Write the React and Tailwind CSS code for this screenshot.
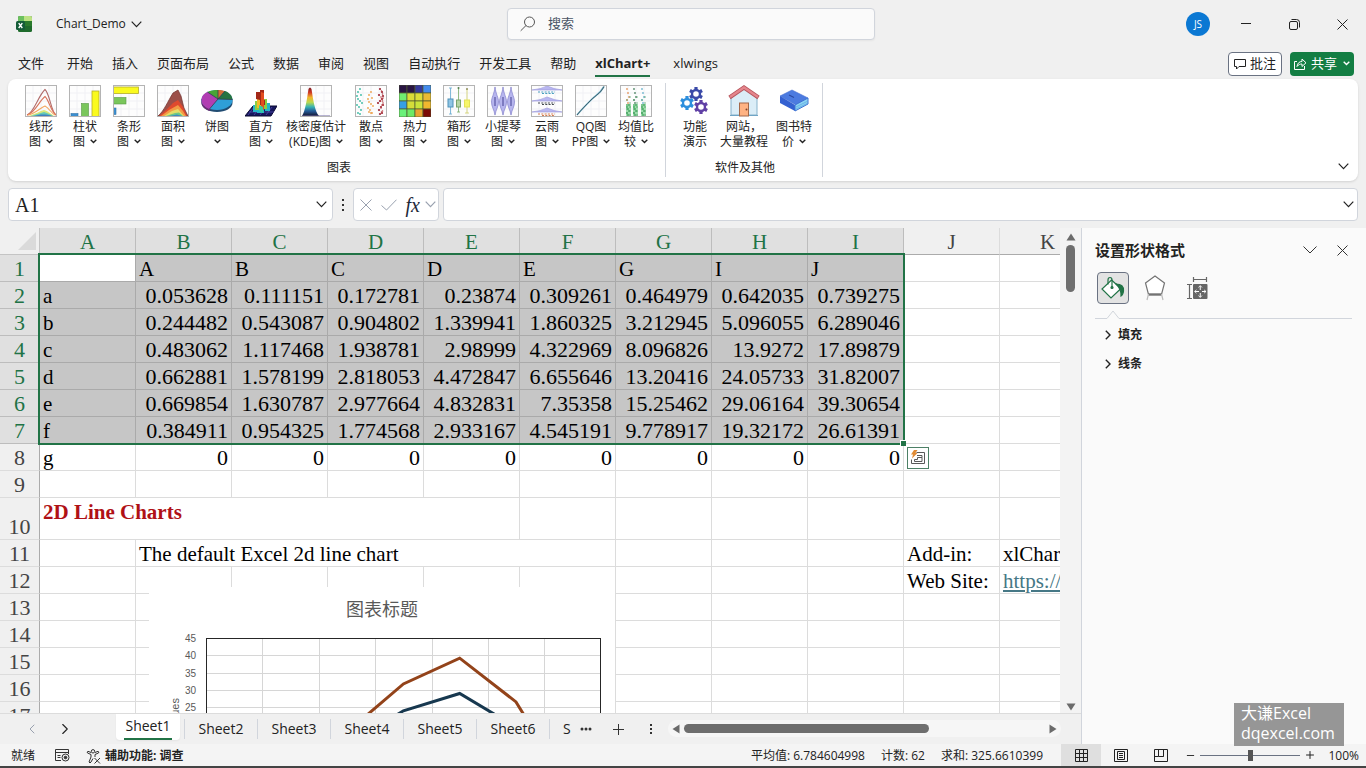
import { useState } from "react";
import { ChevronLeft, ChevronRight, Minus, Plus } from "lucide-react";

const menuTabs = [
  "文件",
  "开始",
  "插入",
  "页面布局",
  "公式",
  "数据",
  "审阅",
  "视图",
  "自动执行",
  "开发工具",
  "帮助",
  "xlChart+",
  "xlwings",
];

const columns = ["A", "B", "C", "D", "E", "F", "G", "H", "I", "J", "K"];

const dataRows = [
  ["", "A", "B", "C", "D", "E", "G", "I", "J"],
  ["a", "0.053628", "0.111151", "0.172781", "0.23874", "0.309261", "0.464979", "0.642035", "0.739275"],
  ["b", "0.244482", "0.543087", "0.904802", "1.339941", "1.860325", "3.212945", "5.096055", "6.289046"],
  ["c", "0.483062", "1.117468", "1.938781", "2.98999", "4.322969", "8.096826", "13.9272", "17.89879"],
  ["d", "0.662881", "1.578199", "2.818053", "4.472847", "6.655646", "13.20416", "24.05733", "31.82007"],
  ["e", "0.669854", "1.630787", "2.977664", "4.832831", "7.35358", "15.25462", "29.06164", "39.30654"],
  ["f", "0.384911", "0.954325", "1.774568", "2.933167", "4.545191", "9.778917", "19.32172", "26.61391"],
  ["g", "0", "0", "0", "0", "0", "0", "0", "0"],
];

const sheets = ["Sheet2", "Sheet3", "Sheet4", "Sheet5", "Sheet6"];

function Chevron({ small, className }) {
  if (small) {
    return (
      <svg width="7" height="5" viewBox="0 0 7 5" className={className}>
        <path d="M.7.7L3.500 3.500L6.300.7" fill="none" stroke="currentColor" strokeWidth="1.400" />
      </svg>
    );
  }
  return (
    <svg width="11" height="7" viewBox="0 0 11 7" className={className}>
      <path d="M.7.700L5.500 5.700L10.300.700" fill="none" stroke="currentColor" strokeWidth="1.200" />
    </svg>
  );
}

function Frame({ children }) {
  return (
    <svg width="32" height="32" viewBox="0 0 32 32">
      <rect x="0.5" y="0.5" width="31" height="31" fill="#fdfdfd" />
      <path d="M8 1v30M16 1v30M24 1v30M1 8h30M1 16h30M1 24h30" stroke="#f1f1f5" />
      {children}
      <rect x="0.5" y="0.5" width="31" height="31" fill="none" stroke="#b4b4b4" />
    </svg>
  );
}

function LineIcon() {
  return (
    <Frame>
      <g fill="none" strokeWidth="1.1">
        <path d="M2 30C9 28 13 11 20 4.500C25 9 26 27 31 30" stroke="#b06b6b" />
        <path d="M2 30C10 28 14 16 20 11.500C24 15 26 27 31 30" stroke="#d8735c" />
        <path d="M3 30C10 29 15 23 20 21C24 23 26 28 30 30" stroke="#f2a55f" />
      </g>
      <path d="M4 31C10 29 15 26 19 25C23 26 26 29 29 31Z" fill="#d9e77c" />
      <path d="M6 31C12 29 16 28 19 27C23 28 26 30 28 31Z" fill="#63c9b8" />
      <path d="M9 31C14 29.500 20 28.500 27 31Z" fill="#3f7fc0" />
    </Frame>
  );
}

function ColumnIcon() {
  return (
    <Frame>
      <rect x="2" y="28.500" width="7" height="3" fill="#3c8fd0" stroke="#3476a8" strokeWidth="0.6" />
      <rect x="12.500" y="18.500" width="7" height="13" fill="#7ac65c" stroke="#589647" strokeWidth="0.6" />
      <rect x="23" y="6" width="7" height="25.500" fill="#fafa1e" stroke="#b3ad2c" strokeWidth="0.8" />
    </Frame>
  );
}

function BarIcon() {
  return (
    <Frame>
      <rect x="0.500" y="2" width="25" height="6.500" fill="#fafa1e" stroke="#b3ad2c" strokeWidth="0.8" />
      <rect x="0.500" y="12.500" width="12.500" height="6.500" fill="#7ac65c" stroke="#589647" strokeWidth="0.6" />
      <rect x="0.500" y="23" width="2.500" height="6.500" fill="#3c8fd0" stroke="#3476a8" strokeWidth="0.6" />
    </Frame>
  );
}

function AreaIcon() {
  return (
    <Frame>
      <path d="M1 31C7 26 11 16 16 8L21 5L24 11L27 23L31 31Z" fill="#9c4f49" stroke="#702f2d" strokeWidth="0.7" />
      <path d="M2 31L9 25L16 18L21 15L26 22L30 31Z" fill="#e04a2e" />
      <path d="M4 31L12 25L21 20L26 26L29 31Z" fill="#f39b45" />
      <path d="M7 31L15 26L21 24L27 31Z" fill="#e5dc68" />
      <path d="M9 31L18 28L22 27.500L26 31Z" fill="#6fc886" />
      <path d="M12 31L20 29.500L25 31Z" fill="#3b8ac4" />
    </Frame>
  );
}

function PieIcon() {
  return (
    <svg width="32" height="32" viewBox="0 0 32 32">
      <path d="M0.500 14v4c0 5 7 9 15.500 9s15.500-4 15.500-9v-4Z" fill="#214c72" />
      <path d="M0.500 14v4c0 3 3 6 8 8l3-5Z" fill="#702b73" />
      <ellipse cx="16" cy="15" rx="15.500" ry="10" fill="#2e9fd8" />
      <path d="M17 14L8.500 24C3 22 .5 18 .5 15C.5 11 3 8.500 6.500 7Z" fill="#b13eb2" />
      <path d="M17 14L6.500 7C9.500 5.500 13 5 17 5Z" fill="#48a437" />
      <path d="M17 14V5C20 5 22 5.500 24 6Z" fill="#d56e36" />
      <path d="M17 14L24 6C28 7.500 31 10 31.500 14.500Z" fill="#277441" />
      <path d="M6.500 7L17 14L8.500 24M17 5v9l7-8M17 14l14.500.5" fill="none" stroke="#333d4d" strokeWidth="0.8" />
    </svg>
  );
}

function HistogramIcon() {
  return (
    <svg width="32" height="32" viewBox="0 0 32 32">
      <path d="M0 31L8 21H32L26 31Z" fill="#16175e" stroke="#0b0b32" />
      <path d="M3 30L9 22M9 30L15 22M15 30L21 22M21 30L27 22M4 27H29" stroke="#564fb2" strokeWidth="0.7" />
      <path d="M8 25V20H12V27H8ZM20 26V18H25V26ZM12 28V21H19V28Z" fill="#25b5c8" />
      <path d="M10 22V16H14V25H10ZM18 24V14H22V24Z" fill="#8cce42" />
      <path d="M12 18V11H16V23H12Z" fill="#f4ba27" />
      <path d="M11 14V7H15V5H19V15H20V20H15V15Z" fill="#a32818" />
      <path d="M16 7V23L19 25V8Z" fill="#e34d1f" />
      <path d="M14 20V26L18 28V22Z" fill="#39c9a0" />
    </svg>
  );
}

function DensityIcon() {
  return (
    <Frame>
      <defs>
        <linearGradient id="density" x1="0" y1="0" x2="0" y2="1">
          <stop offset="0" stopColor="#7b1721" />
          <stop offset="0.18" stopColor="#d23b24" />
          <stop offset="0.35" stopColor="#f0b52b" />
          <stop offset="0.52" stopColor="#b8d84e" />
          <stop offset="0.68" stopColor="#36b3b4" />
          <stop offset="0.83" stopColor="#245996" />
          <stop offset="1" stopColor="#15152f" />
        </linearGradient>
      </defs>
      <path d="M2 31C5 27 7 14 8.500 4Q10 1 11.500 4C13 14 15 27 19 31Z" fill="url(#density)" />
      <path d="M2 31H30" stroke="#726aa4" />
    </Frame>
  );
}

const scatterPoints = [
  [3, 7], [5, 4], [6, 10], [3, 14], [5, 16], [7, 18], [2, 20], [4, 22], [6, 25], [3, 28], [5, 29], [2, 11],
];

function ScatterIcon() {
  return (
    <Frame>
      {scatterPoints.map(([x, y]) => (
        <g key={`${x}-${y}`}>
          <circle cx={x} cy={y} r="0.9" fill="#35b8a0" />
          <circle cx={x + 11} cy={y > 25 ? y - 1 : y + 3} r="0.9" fill="#eda24b" />
          <circle cx={30 - x} cy={y} r="1.1" fill="#9f2635" />
          <circle cx={29 - x / 2} cy={y > 15 ? y - 2 : y + 2} r="0.8" fill="#b94348" />
        </g>
      ))}
    </Frame>
  );
}

const heatColors = [
  "#291542", "#291542", "#35389a", "#438bed",
  "#70eb70", "#dcdb37", "#dddd38", "#e9ba35",
  "#359fe4", "#d4dd39", "#c9e43b", "#f1b72f",
  "#69f27a", "#6eea65", "#e8a532", "#7c0a06",
];

function HeatIcon() {
  return (
    <svg width="32" height="32" viewBox="0 0 32 32">
      {heatColors.map((fill, i) => (
        <rect key={i} x={(i % 4) * 8} y={Math.floor(i / 4) * 8} width="8" height="8" fill={fill} stroke="#4f5a32" strokeWidth="0.7" />
      ))}
    </svg>
  );
}

function BoxIcon() {
  return (
    <Frame>
      <path d="M7.500 3V29M6 3h3M6 29h3" stroke="#62a9d0" strokeWidth="0.8" />
      <rect x="5" y="14" width="5" height="8" fill="#8fc4e4" stroke="#4f91b8" />
      <path d="M15.500 3V27M14 27h3" stroke="#77aa67" strokeWidth="0.8" />
      <rect x="13.500" y="15" width="4" height="7" fill="#b5d4a5" stroke="#79a36a" />
      <path d="M24 4V28M22 28h4" stroke="#d1cf65" strokeWidth="0.8" />
      <rect x="21.500" y="15" width="5" height="7" fill="#f7f66a" stroke="#e4e256" />
      <circle cx="15.500" cy="3" r="1" fill="#517d4c" />
      <circle cx="24" cy="4" r="1" fill="#91915b" />
    </Frame>
  );
}

function ViolinIcon() {
  return (
    <Frame>
      {[8, 16, 24].map((x) => (
        <g key={x} transform={`translate(${x} 0)`}>
          <path d="M0 2C1 10 3.500 12 3.500 17S1 24 0 30C-1 24-3.500 22-3.500 17S-1 10 0 2Z" fill="#b6b5ee" stroke="#8280cb" strokeWidth="0.7" />
          <path d="M0 12v9" stroke="#5754a2" strokeWidth="1.200" />
        </g>
      ))}
    </Frame>
  );
}

function RainIcon() {
  const rows = [
    [5, "#4a9fc0"],
    [16, "#454b50"],
    [27, "#d47c51"],
  ];
  return (
    <Frame>
      {rows.map(([y, color]) => (
        <g key={y}>
          <path d={`M1 ${y}Q10 ${y - 1} 16 ${y - 4}Q23 ${y - 1} 31 ${y}Z`} fill="#b9b7f0" stroke="#9896da" strokeWidth="0.6" />
          <path d={`M7 ${y + 2}h17M11 ${y + 3.500}h13`} stroke={color} strokeDasharray="2 1.300" />
        </g>
      ))}
    </Frame>
  );
}

function QQIcon() {
  return (
    <Frame>
      <path d="M2 30C7 24 11 20 16 15S25 9 29 1.500" fill="none" stroke="#75b2c9" strokeWidth="1.600" />
      <path d="M2 30C7 24 11 20 16 15S25 9 29 1.500" fill="none" stroke="#354e57" strokeWidth="0.8" />
    </Frame>
  );
}

function MeanIcon() {
  const bands = [
    [8, "#e59a63"],
    [15, "#55896a"],
    [23, "#70b6ce"],
  ];
  return (
    <Frame>
      {bands.map(([x, color]) => (
        <g key={x}>
          <rect x={x - 2} y="19" width="5" height="12" fill="#9bdcaa" />
          {[4, 8, 12, 15, 18, 20, 22, 24, 26, 28, 30].map((y, i) => (
            <g key={y}>
              <circle cx={x - 1 + (i % 3)} cy={y} r="0.9" fill={y < 19 ? color : "#45a862"} />
              {y > 10 && <circle cx={x + 2 - (i % 2) * 3} cy={y} r="0.7" fill="#4a9961" />}
            </g>
          ))}
        </g>
      ))}
    </Frame>
  );
}

function Gear({ x, y, color }) {
  return (
    <g transform={`translate(${x} ${y})`}>
      {[0, 60, 120, 180, 240, 300].map((angle) => (
        <rect key={angle} x="-1.600" y="-7" width="3.200" height="3" fill={color} transform={`rotate(${angle})`} />
      ))}
      <circle r="4" fill="#fff" stroke={color} strokeWidth="2.400" />
    </g>
  );
}

function GearsIcon() {
  return (
    <svg width="32" height="32" viewBox="0 0 32 32">
      <Gear x={17} y={9} color="#3b4ba8" />
      <Gear x={8} y={18} color="#2d8fdd" />
      <Gear x={22} y={22} color="#6040a5" />
    </svg>
  );
}

function HouseIcon() {
  return (
    <svg width="32" height="32" viewBox="0 0 32 32">
      <path d="M3 13L16 3L29 13V30H3Z" fill="#dbedf7" stroke="#87b2cb" />
      <path d="M1.500 12.500L16 2.500L30.500 12.500" fill="none" stroke="#b5555c" strokeWidth="4" />
      <path d="M2 12L16 2.500L30 12" fill="none" stroke="#e5858c" strokeWidth="2.400" />
      <rect x="11.500" y="18" width="9" height="13" fill="#ffb383" stroke="#a4694a" />
      <circle cx="18.500" cy="24.500" r="1" fill="#7b432e" />
      <path d="M2 30.500h9M21 30.500h9" stroke="#70a5c5" />
    </svg>
  );
}

function BookIcon() {
  return (
    <svg width="32" height="32" viewBox="0 0 32 32">
      <path d="M2 11L14 5L30 13L18 20Z" fill="#4c7be0" stroke="#456fd2" strokeWidth="0.600" />
      <path d="M2 11V18L17 26V20Z" fill="#3461d1" />
      <path d="M17 20L30 13V19L17 26Z" fill="#8ad3f3" stroke="#3f72d3" />
      <path d="M18 22L30 16M18 24L30 18" stroke="#5fa7df" strokeWidth="0.700" />
      <path d="M11 10l5 2.500" stroke="#2b4aa3" strokeWidth="1.200" />
    </svg>
  );
}

const chartTools = [
  { icon: LineIcon, lines: ["线形", "图"], menu: true },
  { icon: ColumnIcon, lines: ["柱状", "图"], menu: true },
  { icon: BarIcon, lines: ["条形", "图"], menu: true },
  { icon: AreaIcon, lines: ["面积", "图"], menu: true },
  { icon: PieIcon, lines: ["饼图", ""], menu: true },
  { icon: HistogramIcon, lines: ["直方", "图"], menu: true },
  { icon: DensityIcon, lines: ["核密度估计", "(KDE)图"], menu: true, width: "w-[66px]" },
  { icon: ScatterIcon, lines: ["散点", "图"], menu: true },
  { icon: HeatIcon, lines: ["热力", "图"], menu: true },
  { icon: BoxIcon, lines: ["箱形", "图"], menu: true },
  { icon: ViolinIcon, lines: ["小提琴", "图"], menu: true },
  { icon: RainIcon, lines: ["云雨", "图"], menu: true },
  { icon: QQIcon, lines: ["QQ图", "PP图"], menu: true },
  { icon: MeanIcon, lines: ["均值比", "较"], menu: true, width: "w-[46px]" },
];

const otherTools = [
  { icon: GearsIcon, lines: ["功能", "演示"] },
  { icon: HouseIcon, lines: ["网站，", "大量教程"], width: "w-[54px]" },
  { icon: BookIcon, lines: ["图书特", "价"], menu: true, width: "w-[46px]" },
];

function ToolButton({ tool }) {
  const Icon = tool.icon;
  return (
    <button className={`flex flex-col items-center text-xs leading-[15px] whitespace-nowrap ${tool.width || "w-11"}`}>
      <Icon />
      <span className="mt-[2px]">{tool.lines[0]}</span>
      <span className="flex items-center gap-[5px] h-[15px]">
        {tool.lines[1]}
        {tool.menu && <Chevron small />}
      </span>
    </button>
  );
}

function ToolGroup({ title, tools, className }) {
  return (
    <section className={`flex flex-col my-1 pt-[2px] pb-[1px] border-r border-gray-300 ${className}`}>
      <div className="flex flex-1">
        {tools.map((tool) => (
          <ToolButton key={tool.lines.join("")} tool={tool} />
        ))}
      </div>
      <h2 className="text-xs leading-4 text-center">{title}</h2>
    </section>
  );
}

function TitleBar() {
  return (
    <header className="flex items-center h-12 shrink-0 pl-4">
      <div className="flex flex-1 items-center">
        <svg width="16" height="16" viewBox="0 0 16 16" aria-label="Excel">
          <rect x="2" width="14" height="16" rx="1.500" fill="#1f6b2c" />
          <path d="M3.500 0H9v5H2V1.500Q2 0 3.500 0Z" fill="#6cc05f" />
          <path d="M8 0h6.500Q16 0 16 1.500V5H8Z" fill="#bde283" />
          <path d="M8 5h8v5H8Z" fill="#2a7a2c" />
          <rect y="5" width="9" height="9" rx="1.500" fill="#145c38" />
          <path d="M2.700 7.200l3.600 4.800M6.300 7.200L2.700 12" stroke="#fff" strokeWidth="1.400" />
        </svg>
        <button className="flex items-center gap-[5px] ml-6 text-xs">
          Chart_Demo
          <Chevron />
        </button>
      </div>
      <label className="flex items-center gap-3 w-[368px] h-8 px-3 rounded border border-gray-300 bg-[#fafafa] shadow-xs">
        <svg width="16" height="16" viewBox="0 0 16 16" fill="none" stroke="#555" className="shrink-0">
          <circle cx="9.500" cy="6" r="5" />
          <path d="M6 9.500L.7 14.800" />
        </svg>
        <input className="w-full text-[13px] outline-none placeholder:text-gray-600" placeholder="搜索" aria-label="搜索" />
      </label>
      <div className="flex flex-1 justify-end items-center">
        <button className="flex justify-center w-12">
          <span className="flex items-center justify-center size-6 rounded-full bg-[#0b78d3] text-white text-[10px]">JS</span>
        </button>
        <button className="flex justify-center w-12" aria-label="最小化">
          <svg width="10" height="10" viewBox="0 0 10 10"><path d="M0 4.500h10" stroke="#222" /></svg>
        </button>
        <button className="flex justify-center w-12" aria-label="还原">
          <svg width="11" height="11" viewBox="0 0 11 11" fill="none" stroke="#222">
            <rect x="0.500" y="2.500" width="8" height="8" rx="1.500" />
            <path d="M2.500 .5h5q3 0 3 3v5" />
          </svg>
        </button>
        <button className="flex justify-center w-12" aria-label="关闭">
          <svg width="11" height="11" viewBox="0 0 11 11"><path d="M.5.5l10 10M10.500.5l-10 10" stroke="#222" /></svg>
        </button>
      </div>
    </header>
  );
}

function MenuBar() {
  return (
    <nav className="flex items-center h-[31px] shrink-0 pl-[18px] pr-3 text-[13px]">
      <div className="flex flex-1 gap-[19px]">
        {menuTabs.map((tab) => (
          <button
            key={tab}
            className={
              tab === "xlChart+"
                ? "font-bold border-b-2 border-[#217346] leading-6 mr-1"
                : "leading-6 border-b-2 border-transparent first:mr-1"
            }
          >
            {tab}
          </button>
        ))}
      </div>
      <div className="flex gap-2">
        <button className="flex items-center justify-center gap-1 w-[54px] h-6 rounded border border-gray-500 bg-white">
          <svg width="12" height="12" viewBox="0 0 12 12" fill="none" stroke="#222">
            <path d="M.5 1.500h11v7H5L2.500 11V8.500h-2Z" />
          </svg>
          批注
        </button>
        <button className="flex items-center justify-center gap-1 w-16 h-6 rounded bg-[#137e43] text-white">
          <svg width="13" height="13" viewBox="0 0 13 13" fill="none" stroke="#fff">
            <path d="M3 4.500H.5v8h10V9" />
            <path d="M3 9.500C3.500 6 5.500 4.500 8 4.500V2l4 3.800L8 9.500V7C6 7 4.500 7.500 3 9.500Z" />
          </svg>
          共享
          <Chevron small className="ml-[2px]" />
        </button>
      </div>
    </nav>
  );
}

function FormulaBar() {
  return (
    <div className="flex items-center shrink-0 px-2 py-[7px]">
      <div className="flex items-center w-[325px] h-[33px] pl-[6px] pr-[5px] rounded border border-gray-300 bg-white">
        <input className="flex-1 min-w-0 font-['Liberation_Serif',serif] text-xl outline-none" defaultValue="A1" aria-label="名称框" />
        <button aria-label="名称列表"><Chevron /></button>
      </div>
      <svg width="20" height="14" viewBox="0 0 20 14" fill="#333">
        <path d="M9 1h2v2H9zM9 6h2v2H9zM9 11h2v2H9z" />
      </svg>
      <div className="flex items-center justify-between w-[86px] h-[33px] pl-[6px] pr-[2px] rounded border border-gray-300 bg-white text-gray-400">
        <button aria-label="取消">
          <svg width="12" height="12" viewBox="0 0 12 12"><path d="M.5.5l11 11M11.500.5l-11 11" stroke="currentColor" /></svg>
        </button>
        <button aria-label="输入">
          <svg width="16" height="12" viewBox="0 0 16 12"><path d="M.5 6.500L5.500 11L15.500.7" fill="none" stroke="currentColor" /></svg>
        </button>
        <button className="flex items-center gap-[5px]" aria-label="插入函数">
          <span className="font-['Liberation_Serif',serif] italic text-xl leading-6 text-gray-800">fx</span>
          <Chevron />
        </button>
      </div>
      <div className="flex items-center flex-1 h-[33px] ml-1 pr-[3px] rounded border border-gray-300 bg-white">
        <input className="flex-1 min-w-0 px-1 outline-none" aria-label="编辑栏" />
        <button aria-label="展开编辑栏"><Chevron /></button>
      </div>
    </div>
  );
}

function RowHeader({ n, selected }) {
  return (
    <th
      scope="row"
      className={`p-0 pt-[2px] border-r border-b font-normal text-[22px] leading-6 align-bottom ${
        selected ? "bg-[#e0e0e0] text-[#217346] border-[#bdbdbd]" : "bg-[#f0f0f0] text-[#444] border-r-[#ababab] border-b-[#dcdcdc]"
      }`}
    >
      {n}
    </th>
  );
}

function Cell({ children, className = "", line = "border-[#dcdcdc]", colSpan }) {
  return (
    <td colSpan={colSpan} className={`h-[27px] pt-[2px] pb-0 px-[3px] border-r border-b leading-6 whitespace-nowrap overflow-hidden ${line} ${className}`}>
      {children}
    </td>
  );
}

function EmptyCells({ count }) {
  return Array.from({ length: count }, (_, i) => <Cell key={i} />);
}

function DataCell({ row, col, value }) {
  const isNumber = row > 0 && col > 0;
  const inRange = row < 7;
  const isActive = row === 0 && col === 0;
  return (
    <Cell
      line={inRange ? "border-[#aaaaaa]" : "border-[#dcdcdc]"}
      className={`${isNumber ? "text-right text-[22px]" : "text-[21px]"} ${inRange && !isActive ? "bg-[#c6c6c6]" : ""}`}
    >
      {value}
    </Cell>
  );
}

const seriesJ = [0.739, 6.289, 17.899, 31.82, 39.307, 26.614, 0];
const seriesI = [0.642, 5.096, 13.927, 24.057, 29.062, 19.322, 0];

// the plot area runs 45 -> 0 over 155px, one category every 56.3px
function toPoints(values) {
  return values.map((v, i) => `${85.5 + i * 56.3},${51.5 + (45 - v) * 3.45}`).join(" ");
}

function LineChart() {
  return (
    <svg width="466" height="220" viewBox="0 0 466 220" className="bg-white font-['Liberation_Sans','Noto_Sans_CJK_SC',sans-serif]">
      <text x="233" y="29" textAnchor="middle" fontSize="18" fill="#595959">图表标题</text>
      {[40, 35, 30, 25, 20].map((v) => (
        <path key={v} d={`M57 ${Math.round((45 - v) * 3.45) + 51.5}H451`} stroke="#d6d6d6" />
      ))}
      {[113, 170, 226, 283, 339, 395].map((x) => (
        <path key={x} d={`M${x + 0.5} 52V207`} stroke="#d6d6d6" />
      ))}
      {[45, 40, 35, 30, 25, 20].map((v) => (
        <text key={v} x="47" y={55 + (45 - v) * 3.45} textAnchor="end" fontSize="10" fill="#595959">{v}</text>
      ))}
      <text transform="translate(30 111) rotate(-90)" textAnchor="end" fontSize="11" fill="#595959">Values</text>
      <rect x="57.500" y="51.500" width="394" height="155" fill="none" stroke="#262626" />
      <polyline points={toPoints(seriesI)} fill="none" stroke="#17384f" strokeWidth="3" />
      <polyline points={toPoints(seriesJ)} fill="none" stroke="#93431a" strokeWidth="3" />
    </svg>
  );
}

function Grid() {
  return (
    <div className="relative flex-1 min-w-0 overflow-hidden bg-white font-['Liberation_Serif',serif] text-black">
      <table className="table-fixed w-[1096px] border-separate border-spacing-0">
        <colgroup>
          <col className="w-10" />
          {columns.map((c) => (
            <col key={c} className="w-24" />
          ))}
        </colgroup>
        <thead>
          <tr className="h-[27px]">
            <th className="p-0 bg-[#f0f0f0] border-r border-b border-[#c4c4c4]">
              <svg width="36" height="20" viewBox="0 0 36 20"><path d="M36 1V19H18Z" fill="#dadada" /></svg>
            </th>
            {columns.map((c, i) => (
              <th
                key={c}
                scope="col"
                className={`p-0 pt-[2px] border-r border-b font-normal text-[21px] leading-6 ${
                  i < 9 ? "bg-[#e0e0e0] text-[#217346] border-[#bdbdbd]" : "bg-[#f0f0f0] text-[#444] border-r-[#dcdcdc] border-b-[#ababab]"
                }`}
              >
                {c}
              </th>
            ))}
          </tr>
        </thead>
        <tbody>
          {dataRows.map((values, row) => (
            <tr key={row}>
              <RowHeader n={row + 1} selected={row < 7} />
              {values.map((value, col) => (
                <DataCell key={col} row={row} col={col} value={value} />
              ))}
              <EmptyCells count={2} />
            </tr>
          ))}
          <tr>
            <RowHeader n={9} />
            <EmptyCells count={11} />
          </tr>
          <tr className="h-[42px]">
            <RowHeader n={10} />
            <Cell colSpan={5} className="align-top text-[21px] font-bold text-[#b01116]">2D Line Charts</Cell>
            <EmptyCells count={6} />
          </tr>
          <tr>
            <RowHeader n={11} />
            <Cell />
            <Cell colSpan={5} className="text-[21px]">The default Excel 2d line chart</Cell>
            <EmptyCells count={3} />
            <Cell className="text-[21px]">Add-in:</Cell>
            <Cell className="text-[21px]">xlChart+</Cell>
          </tr>
          <tr>
            <RowHeader n={12} />
            <EmptyCells count={9} />
            <Cell className="text-[21px]">Web Site:</Cell>
            <Cell className="text-[21px]">
              <a href="https://dqexcel.com" className="text-[#467886] underline">https://</a>
            </Cell>
          </tr>
          {[13, 14, 15, 16, 17].map((n) => (
            <tr key={n}>
              <RowHeader n={n} />
              <EmptyCells count={11} />
            </tr>
          ))}
        </tbody>
      </table>

      {/* selection A1:I7 */}
      <div className="absolute left-[38px] top-[25px] w-[867px] h-[192px] border-2 border-[#217346] pointer-events-none">
        <span className="absolute -right-[3px] -bottom-[3px] size-[6px] bg-[#217346] border-t border-l border-white" />
      </div>
      <button className="absolute left-[907px] top-[219px] flex items-center justify-center w-[22px] h-[22px] border border-[#4d8066] bg-white" aria-label="快速分析">
        <svg width="16" height="16" viewBox="0 0 16 16" fill="none" stroke="#595959">
          <path d="M6.500 2.500h8v11h-13v-4M7 5.500h5v2H8.500M4.500 11.500V9.500h3v-2h4.500v4Z" />
          <path d="M4 0h3.500L5.500 3h2L2 8.500l1-4H1Z" fill="#e08b35" stroke="none" />
        </svg>
      </button>
      <div className="absolute left-[149px] top-[359px]">
        <LineChart />
      </div>
    </div>
  );
}

function VerticalScroll() {
  return (
    <div className="flex flex-col items-center w-[21px] shrink-0 bg-[#f3f3f3]">
      <button className="h-[17px]" aria-label="向上滚动">
        <svg width="10" height="8" viewBox="0 0 10 8"><path d="M5 0.500L9.500 7.500H.5Z" fill="#6b6b6b" /></svg>
      </button>
      <div className="w-[9px] h-[47px] rounded-full bg-[#6e6e6e]" />
      <button className="mt-auto h-3" aria-label="向下滚动">
        <svg width="10" height="8" viewBox="0 0 10 8"><path d="M5 7.500L9.500.5H.5Z" fill="#6b6b6b" /></svg>
      </button>
    </div>
  );
}

function SheetTabs() {
  return (
    <div className="flex h-[31px] shrink-0 bg-[#f0f0f0] text-sm border-t border-[#dcdcdc]">
      <div className="flex items-center gap-4 w-[116px] shrink-0 pl-6">
        <button aria-label="上一张工作表"><ChevronLeft size={16} strokeWidth={1.500} className="text-gray-400" /></button>
        <button aria-label="下一张工作表"><ChevronRight size={18} strokeWidth={1.500} /></button>
      </div>
      <button className="w-16 h-[26px] mr-1 px-2 rounded-b bg-white leading-[22px] shadow-xs">
        <span className="block h-[25px] border-b-2 border-[#217346]">Sheet1</span>
      </button>
      {sheets.map((name) => (
        <button key={name} className="w-[73px] h-5 mt-[5px] border-l border-gray-300 leading-5">{name}</button>
      ))}
      <button className="h-5 mt-[5px] pl-[13px] border-l border-gray-300 leading-5">S</button>
      <button className="px-[9px]" aria-label="更多工作表">
        <svg width="12" height="4" viewBox="0 0 12 4" fill="#333">
          <circle cx="2" cy="2" r="1.500" /><circle cx="6" cy="2" r="1.500" /><circle cx="10" cy="2" r="1.500" />
        </svg>
      </button>
      <button className="px-3" aria-label="新工作表">
        <svg width="11" height="11" viewBox="0 0 11 11"><path d="M5.500 0v11M0 5.500h11" stroke="#333" /></svg>
      </button>
      <div className="flex items-center pl-2 pr-[10px]">
        <svg width="14" height="14" viewBox="0 0 14 14" fill="#333"><path d="M6 2h2v2H6zM6 6h2v2H6zM6 10h2v2H6z" /></svg>
      </div>
      <div className="flex flex-1 items-center h-[17px] mt-[6px] mr-5 px-1 gap-1 rounded-full bg-[#f6f6f6]">
        <button aria-label="向左滚动">
          <svg width="8" height="10" viewBox="0 0 8 10"><path d="M.5 5L7.500.5v9Z" fill="#6b6b6b" /></svg>
        </button>
        <div className="flex-1">
          <div className="w-[68%] h-[9px] rounded-full bg-[#6e6e6e]" />
        </div>
        <button aria-label="向右滚动">
          <svg width="8" height="10" viewBox="0 0 8 10"><path d="M7.500 5L.5.5v9Z" fill="#6b6b6b" /></svg>
        </button>
      </div>
    </div>
  );
}

function FormatPane() {
  return (
    <aside className="w-[285px] shrink-0 border-l border-gray-300 bg-[#fafafa] pl-[13px] pr-[14px]">
      <div className="flex items-center h-11">
        <h2 className="flex-1 text-[15px] font-bold">设置形状格式</h2>
        <button aria-label="窗格选项">
          <svg width="14" height="8" viewBox="0 0 14 8"><path d="M.5.5L7 7L13.500.5" fill="none" stroke="#333" /></svg>
        </button>
        <button className="ml-5 mr-1" aria-label="关闭窗格">
          <svg width="11" height="11" viewBox="0 0 11 11"><path d="M.5.5l10 10M10.500.5l-10 10" stroke="#333" /></svg>
        </button>
      </div>
      <div className="flex items-center pl-[2px] gap-[10px]">
        <button className="flex items-center justify-center size-8 rounded border border-gray-500 bg-[#e3e3e3]" aria-label="填充与线条">
          <svg width="24" height="24" viewBox="0 0 24 24" fill="none" stroke="#217346" strokeWidth="1.200">
            <path d="M10.500 4L20 12.500L10 22L1 13Z" fill="#fff" />
            <path d="M7 8.500V4Q7 1.500 9 1.500T11 4V11" stroke="#217346" />
            <circle cx="11" cy="11.500" r="1" fill="#217346" />
            <path d="M15 8Q23 8 22.500 15Q22 19 20 20Q20.500 13 15 8Z" fill="#217346" />
          </svg>
        </button>
        <button className="flex items-center justify-center size-8" aria-label="效果">
          <svg width="22" height="26" viewBox="0 0 22 26" fill="#fff" stroke="#737373" strokeWidth="1.200">
            <path d="M11 1L20.500 8L17.500 19.500H4.500L1.500 8Z" />
            <path d="M4.500 19.500h13" strokeWidth="2.400" />
            <path d="M4.500 19L3 25M17.500 19L19 25" stroke="#bbb" />
          </svg>
        </button>
        <button className="flex items-center justify-center size-8" aria-label="大小与属性">
          <svg width="22" height="24" viewBox="0 0 22 24">
            <path d="M7.500 1v5M20.500 1v5M7.500 3.500h13M1 8.500h5M1 22.500h5M3.500 8.500v14" stroke="#666" strokeWidth="1.200" />
            <rect x="7" y="8" width="14.500" height="15" rx="1" fill="#666" />
            <path d="M14.250 10v4M14.250 17v4M9 15.500h4M16 15.500h4" stroke="#fff" />
            <path d="M12.500 11.500L14.250 9.500L16 11.500M12.500 19.500L14.250 21.500L16 19.500M10.500 13.800L8.500 15.500L10.500 17.200M18 13.800L20 15.500L18 17.200" fill="none" stroke="#fff" strokeWidth="0.8" />
          </svg>
        </button>
      </div>
      <div className="flex mt-[6px]">
        <div className="w-3 border-b border-gray-300" />
        <svg width="12" height="9" viewBox="0 0 12 9"><path d="M0 8.500L6 1L12 8.500" fill="none" stroke="#d1d5db" /></svg>
        <div className="flex-1 border-b border-gray-300" />
      </div>
      <div className="flex flex-col items-start gap-[9px] mt-[6px] pl-[10px]">
        {["填充", "线条"].map((name) => (
          <button key={name} className="flex items-center gap-[7px] text-xs leading-5 font-bold">
            <svg width="6" height="10" viewBox="0 0 6 10"><path d="M.8.8L5 5L.8 9.200" fill="none" stroke="#222" strokeWidth="1.400" /></svg>
            {name}
          </button>
        ))}
      </div>
    </aside>
  );
}

function StatusBar() {
  const [zoom, setZoom] = useState(100);
  return (
    <footer className="shrink-0">
      <div className="flex items-center h-[22px] pl-[11px] pr-[7px] bg-[#f4f4f4] text-xs leading-[18px]">
        <span className="pt-[2px]">就绪</span>
        <button className="ml-5" aria-label="录制宏">
          <svg width="15" height="13" viewBox="0 0 15 13" fill="none" stroke="#333">
            <path d="M6 11.500H.5V.5h13V5M.5 3.500h13M2.500 6.500h3M2.500 8.500h3" />
            <circle cx="10.500" cy="8.500" r="3.500" /><circle cx="10.500" cy="8.500" r="1.300" fill="#333" />
          </svg>
        </button>
        <button className="flex items-center gap-1 ml-4 pt-[2px] font-bold">
          <svg width="15" height="15" viewBox="0 0 15 15" fill="none" stroke="#333" strokeLinejoin="round">
            <circle cx="7" cy="2.300" r="1.700" />
            <path d="M5 3.500L2 2.300Q.5 3 1.500 4L5 5.500V8L3 13Q4 15 5 13L7 9.500M9 3.500l3-1.200q1.500.7.5 1.700L9 5.500V8" />
            <path d="M8.500 9l5.500 5.500M14 9l-5.500 5.500" />
          </svg>
          辅助功能: 调查
        </button>
        <div className="flex gap-4 ml-auto mr-[18px] pt-[2px]">
          <span>平均值: 6.784604998</span>
          <span>计数: 62</span>
          <span>求和: 325.6610399</span>
        </div>
        <button className="flex items-center justify-center w-10 h-[22px] bg-[#dfdfdf]" aria-label="普通">
          <svg width="13" height="13" viewBox="0 0 13 13" fill="none" stroke="#222">
            <path d="M.5.5h12v12H.5ZM4.500.5v12M8.500.5v12M.5 4.500h12M.5 8.500h12" />
          </svg>
        </button>
        <button className="flex items-center justify-center w-10" aria-label="页面布局">
          <svg width="14" height="13" viewBox="0 0 14 13" fill="none" stroke="#222">
            <path d="M.5.5h13v12H.5ZM3.500 2.500h7v8h-7ZM5 4.500h4M5 6.500h4M5 8.500h4" />
          </svg>
        </button>
        <button className="flex items-center justify-center w-10" aria-label="分页预览">
          <svg width="14" height="13" viewBox="0 0 14 13" fill="none" stroke="#222">
            <path d="M.5.5h13v12H.5ZM4.500.5v7h5v-7M.5 7.500h4M9.500 7.500V.5" />
          </svg>
        </button>
        <button className="ml-1" aria-label="缩小"><Minus size={11} strokeWidth={2} /></button>
        <input
          type="range"
          min="0"
          max="200"
          value={zoom}
          onChange={(e) => setZoom(Number(e.target.value))}
          aria-label="显示比例"
          className="w-[100px] h-3 mx-1 appearance-none bg-transparent [&::-webkit-slider-runnable-track]:h-px [&::-webkit-slider-runnable-track]:bg-gray-500 [&::-webkit-slider-thumb]:appearance-none [&::-webkit-slider-thumb]:w-[5px] [&::-webkit-slider-thumb]:h-[11px] [&::-webkit-slider-thumb]:-mt-[5px] [&::-webkit-slider-thumb]:bg-[#555]"
        />
        <button aria-label="放大"><Plus size={12} strokeWidth={2} /></button>
        <span className="w-[43px] pt-[2px] text-right">{zoom}%</span>
      </div>
      <div className="h-[2px] bg-[#444]" />
    </footer>
  );
}

export default function App() {
  return (
    <div className="relative flex flex-col h-screen overflow-hidden bg-[#f0f0f0] text-[#222] font-['Open_Sans','Noto_Sans_CJK_SC',sans-serif]">
      <TitleBar />
      <MenuBar />
      <div className="flex h-[102px] shrink-0 mx-2 rounded-lg bg-white shadow-sm">
        <ToolGroup title="图表" tools={chartTools} className="pl-[11px] pr-[6px]" />
        <ToolGroup title="软件及其他" tools={otherTools} className="pl-[7px] pr-[5px]" />
        <button className="ml-auto mr-[9px] mb-[11px] self-end" aria-label="折叠功能区">
          <Chevron />
        </button>
      </div>
      <FormulaBar />
      <main className="flex flex-1 min-h-0">
        <div className="flex flex-col flex-1 min-w-0">
          <div className="flex flex-1 min-h-0">
            <Grid />
            <VerticalScroll />
          </div>
          <SheetTabs />
        </div>
        <FormatPane />
      </main>
      <StatusBar />
      <div className="absolute right-[22px] bottom-[22px] w-[110px] h-[43px] px-[7px] bg-[#969696] text-white text-base leading-5">
        <p>大谦Excel</p>
        <p>dqexcel.com</p>
      </div>
    </div>
  );
}
